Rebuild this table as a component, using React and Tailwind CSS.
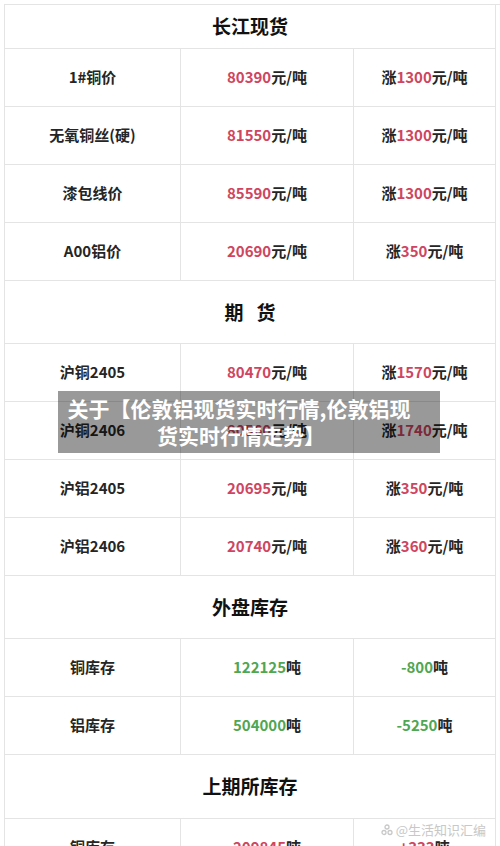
import React from 'react';

const sections = [
  {
    title: '长江现货',
    head: 'h-[44px]',
    rows: [
      { name: '1#铜价', price: '80390', unit: '元/吨', up: '1300', color: 'red' },
      { name: '无氧铜丝(硬)', price: '81550', unit: '元/吨', up: '1300', color: 'red' },
      { name: '漆包线价', price: '85590', unit: '元/吨', up: '1300', color: 'red' },
      { name: 'A00铝价', price: '20690', unit: '元/吨', up: '350', color: 'red' },
    ],
  },
  {
    title: '期货',
    spaced: true,
    head: 'h-[63px]',
    rows: [
      { name: '沪铜2405', price: '80470', unit: '元/吨', up: '1570', color: 'red' },
      { name: '沪铜2406', price: '80560', unit: '元/吨', up: '1740', color: 'red' },
      { name: '沪铝2405', price: '20695', unit: '元/吨', up: '350', color: 'red' },
      { name: '沪铝2406', price: '20740', unit: '元/吨', up: '360', color: 'red' },
    ],
  },
  {
    title: '外盘库存',
    head: 'h-[63px]',
    rows: [
      { name: '铜库存', price: '122125', unit: '吨', change: '-800', color: 'green' },
      { name: '铝库存', price: '504000', unit: '吨', change: '-5250', color: 'green' },
    ],
  },
  {
    title: '上期所库存',
    head: 'h-[64px]',
    rows: [
      { name: '铜库存', price: '209845', unit: '吨', change: '+333', color: 'red' },
    ],
  },
];

const numColor = {
  red: 'text-[#cf4560]',
  green: 'text-[#4fa653]',
};

const cell = 'flex items-center justify-center border-r border-b border-[#e4e4e4] h-[58px]';

const App = () => {
  return (
    <div
      className="relative w-[500px] h-[846px] overflow-hidden bg-white pt-1 pl-1"
      style={{ fontFamily: '"Noto Sans CJK SC", "Noto Sans", sans-serif' }}
    >
      <div className="grid grid-cols-[176px_173px_142px] border-l border-t border-[#e4e4e4] text-[15px] font-bold text-[#252525]">
        {sections.map(section => (
          <React.Fragment key={section.title}>
            <div className={`col-span-3 flex items-center justify-center border-r border-b border-[#e4e4e4] text-[19px] text-[#111] ${section.head} ${section.spaced ? 'gap-[13px]' : ''}`}>
              {section.spaced
                ? section.title.split('').map(ch => <span key={ch}>{ch}</span>)
                : section.title}
            </div>
            {section.rows.map((row, i) => (
              <React.Fragment key={section.title + i}>
                <div className={cell}>{row.name}</div>
                <div className={cell}>
                  <span className={numColor[row.color]}>{row.price}</span>
                  {row.unit}
                </div>
                <div className={cell}>
                  {row.up ? (
                    <>
                      涨<span className={numColor[row.color]}>{row.up}</span>{row.unit}
                    </>
                  ) : (
                    <>
                      <span className={numColor[row.color]}>{row.change}</span>{row.unit}
                    </>
                  )}
                </div>
              </React.Fragment>
            ))}
          </React.Fragment>
        ))}
      </div>

      {/* title caption over the picture */}
      <div className="absolute left-[58px] top-[391px] w-[382px] h-[62px] bg-black/40 flex flex-col items-center justify-center text-white font-bold text-[21px] leading-[27px]">
        <span className="-ml-[20px] whitespace-nowrap">关于【伦敦铝现货实时行情,伦敦铝现</span>
        <span className="-ml-[16px] whitespace-nowrap">货实时行情走势】</span>
      </div>

      {/* watermark */}
      <div className="absolute right-[14px] top-[820px] flex items-center gap-[3px] text-[13px] text-[#c8c8c8] [text-shadow:0_0_2px_#fff]">
        <svg width="12" height="12" viewBox="0 0 12 12" fill="none" stroke="#c8c8c8" strokeWidth="1.3">
          <circle cx="6" cy="3" r="2" />
          <circle cx="3" cy="8.5" r="2" />
          <circle cx="9" cy="8.5" r="2" />
        </svg>
        <span>@生活知识汇编</span>
      </div>
    </div>
  );
};

export default App;
